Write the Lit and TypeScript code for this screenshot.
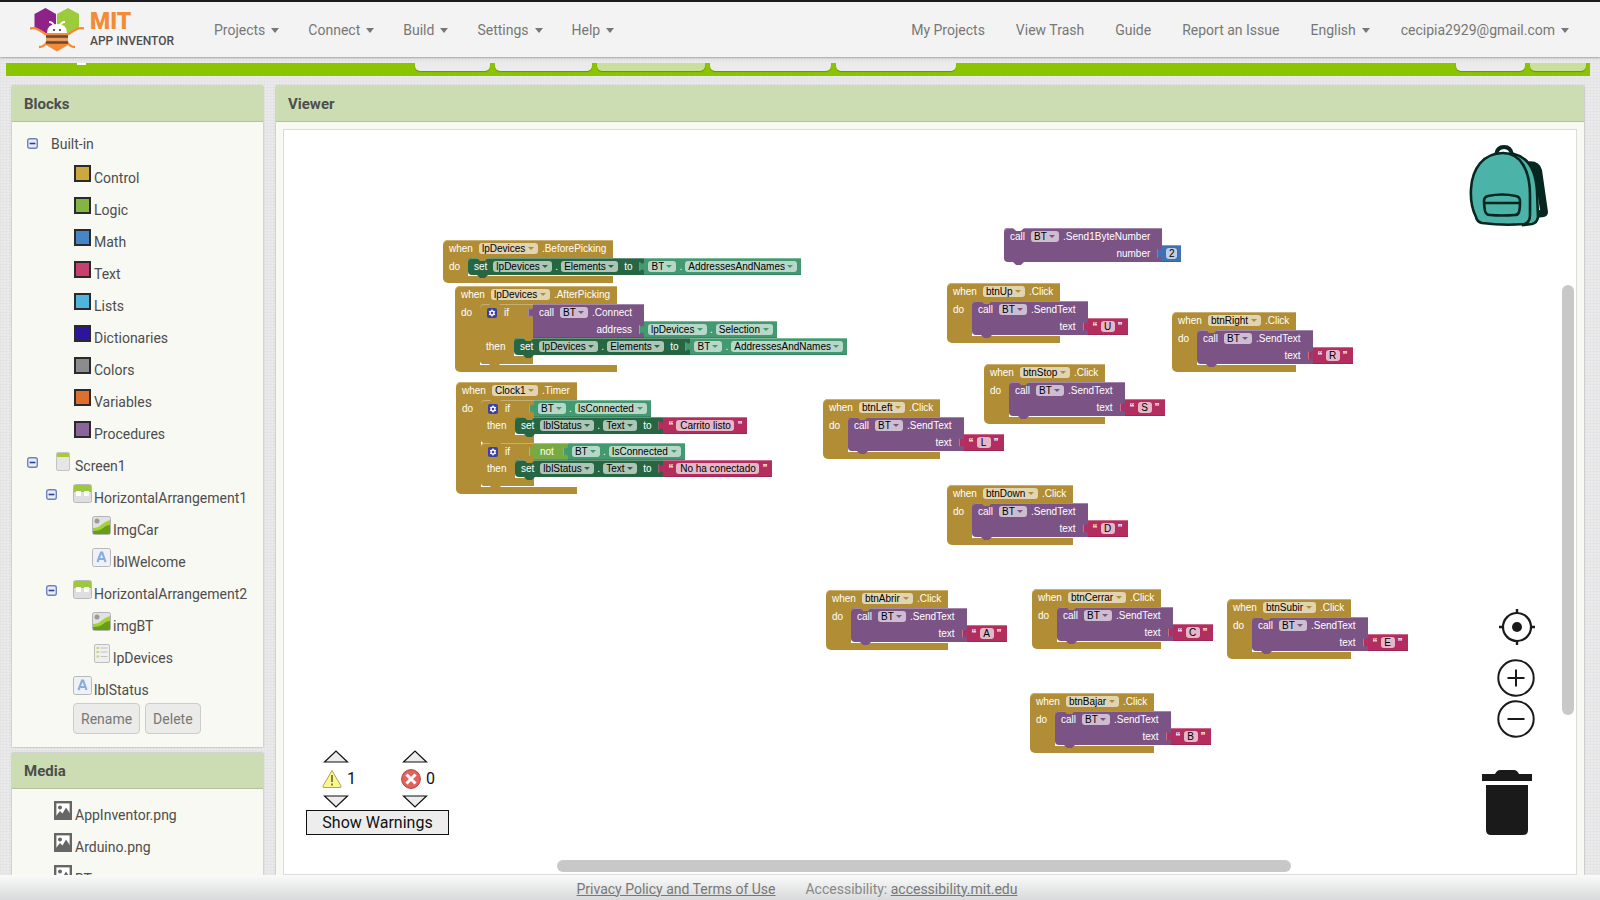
import { LitElement, html, svg, css, nothing } from "lit";
import { customElement } from "lit/decorators.js";

type Kind = "control" | "procedure" | "set" | "get" | "logic" | "text" | "number";

const OPTIONS_LABEL = "Option";

/* ---------- block building helpers ---------- */

const drop = (value: string) => html`<span class="drop"><select aria-label=${OPTIONS_LABEL}><option>${value}</option></select></span>`;

const value = (kind: Kind, body: unknown) => html`<div class="value ${kind}">${body}</div>`;

const getter = (component: string, property: string) =>
  value("get", html`${drop(component)}<span class="dot">.</span>${drop(property)}`);

const literal = (text: string, width: number) =>
  value("text", html`<span class="quote">“</span><input class="field" aria-label="Text" style="width:${width}px" .value=${text}><span class="quote">”</span>`);

const number = (text: string) =>
  value("number", html`<input class="field" aria-label="Number" style="width:11px" .value=${text}>`);

const setter = (component: string, property: string, input: unknown) => html`
  <div class="stmt set line">
    <span class="word">set</span>${drop(component)}<span class="dot">.</span>${drop(property)}<span class="word to">to</span>
    <span class="plugged">${input}</span>
  </div>`;

const callRows = (component: string, method: string, arg: string, input: unknown) => html`
  <div class="row"><span class="word">call</span>${drop(component)}<span class="after">${method}</span></div>
  <div class="row arg"><span>${arg}</span><span class="plugged">${input}</span></div>`;

const call = (component: string, method: string, arg: string, input: unknown) =>
  html`<div class="stmt procedure">${callRows(component, method, arg, input)}</div>`;

const ifBlock = (test: unknown, then: unknown, tall = false) => html`
  <div class="stmt control cond">
    <div class="row test ${tall ? "tall" : ""}">
      <svg class="gear" viewBox="0 0 10 10"><rect width="10" height="10" rx="2" fill="#3b3fa5"/><circle cx="5" cy="5" r="2" fill="none" stroke="#fff" stroke-width="1.3"/><path d="M5 1.4v7.2M1.9 3.2l6.2 3.6M8.1 3.2L1.9 6.8" stroke="#fff" stroke-width="1"/><circle cx="5" cy="5" r="1.2" fill="#3b3fa5"/></svg>
      <span>if</span><span class="plugged end">${test}</span>
    </div>
    <div class="body"><div class="bar then">then</div><div class="slot">${then}</div></div>
    <div class="foot"></div>
  </div>`;

const event = (component: string, name: string, body: unknown) => html`
  <div class="event control">
    <div class="head"><span class="word">when</span>${drop(component)}<span class="after">${name}</span></div>
    <div class="body"><div class="bar do">do</div><div class="slot">${body}</div></div>
    <div class="foot"></div>
  </div>`;

const sendEvent = (button: string, letter: string) =>
  event(button, ".Click", call("BT", ".SendText", "text", literal(letter, 14)));

/* Top-level blocks with their place on the workspace. */
const BLOCKS: { x: number; y: number; block: unknown }[] = [
  { x: 159, y: 110, block: event("lpDevices", ".BeforePicking", setter("lpDevices", "Elements", getter("BT", "AddressesAndNames"))) },
  {
    x: 171, y: 156,
    block: event("lpDevices", ".AfterPicking", ifBlock(
      value("procedure", html`<div class="stack">${callRows("BT", ".Connect", "address", getter("lpDevices", "Selection"))}</div>`),
      setter("lpDevices", "Elements", getter("BT", "AddressesAndNames")), true)),
  },
  {
    x: 172, y: 252,
    block: event("Clock1", ".Timer", html`
      ${ifBlock(getter("BT", "IsConnected"), setter("lblStatus", "Text", literal("Carrito listo", 58)))}
      ${ifBlock(value("logic", html`<span class="not">not</span><span class="plugged">${getter("BT", "IsConnected")}</span>`),
        setter("lblStatus", "Text", literal("No ha conectado", 83)))}`),
  },
  { x: 720, y: 98, block: call("BT", ".Send1ByteNumber", "number", number("2")) },
  { x: 663, y: 153, block: sendEvent("btnUp", "U") },
  { x: 888, y: 182, block: sendEvent("btnRight", "R") },
  { x: 700, y: 234, block: sendEvent("btnStop", "S") },
  { x: 539, y: 269, block: sendEvent("btnLeft", "L") },
  { x: 663, y: 355, block: sendEvent("btnDown", "D") },
  { x: 542, y: 460, block: sendEvent("btnAbrir", "A") },
  { x: 748, y: 459, block: sendEvent("btnCerrar", "C") },
  { x: 943, y: 469, block: sendEvent("btnSubir", "E") },
  { x: 746, y: 563, block: sendEvent("btnBajar", "B") },
];

@customElement("block-workspace")
class BlockWorkspace extends LitElement {
  static styles = css`
    :host { display: block; position: absolute; inset: 0; overflow: hidden; font: 10px/17px "Liberation Sans", Arial, sans-serif; color: #fff; white-space: nowrap; }
    .top { position: absolute; }
    .control { --c: #b18e35; --hi: #c8b072; }
    .procedure { --c: #7c5385; --hi: #a387aa; }
    .set { --c: #266643; --hi: #67947b; }
    .get { --c: #439970; --hi: #7bb89b; }
    .logic { --c: #77ab41; --hi: #a0c47a; }
    .text { --c: #b32d5e; --hi: #ca6c8e; }
    .number { --c: #3f71b5; --hi: #799ccb; }
    .event { display: grid; width: max-content; }
    .head { display: flex; align-items: center; height: 18px; padding: 0 7px 2px 6px; box-sizing: border-box; background: var(--c); border-radius: 5px 0 0 0; box-shadow: inset 0 1px var(--hi); }
    .body { display: flex; width: 0; min-width: 100%; }
    .bar { flex: none; background: var(--c); box-sizing: border-box; }
    .bar.do { width: 25px; padding-left: 6px; }
    .bar.then { width: 34px; padding-left: 6px; }
    .slot { flex: 1; width: 0; padding-bottom: 1px; background: linear-gradient(#b18e35, #b18e35) 0 0 / 6px 6px no-repeat, #fff; }
    .foot { height: 7px; background: var(--c); border-radius: 0 0 0 5px; }
    .stmt { position: relative; width: max-content; background: var(--c); border-radius: 4px 0 0 4px; box-shadow: inset 0 1px var(--hi); }
    .stmt::before, .stmt::after { content: ""; position: absolute; left: 9px; width: 11px; height: 3px; clip-path: polygon(0 0, 100% 0, 72% 100%, 28% 100%); }
    .stmt::before { top: 0; background: var(--notch, #b18e35); }
    .stmt::after { top: 100%; background: var(--c); z-index: 1; }
    .free > .stmt { --notch: #fff; }
    .line, .row { display: flex; align-items: center; height: 17px; }
    .line { padding-left: 6px; }
    .row { padding: 0 12px 0 6px; }
    .row.arg { justify-content: flex-end; padding-left: 40px; }
    .row.arg > .plugged { margin: 0 -12px 0 12px; }
    .word { margin-right: 6px; }
    .word.to { margin: 0 12px 0 6px; }
    .dot { margin: 0 3px; }
    .after { margin-left: 4px; }
    .plugged { display: block; width: 0; height: 17px; overflow: visible; }
    .value { position: relative; display: flex; align-items: center; width: max-content; min-height: 17px; padding: 0 4px; background: var(--c); box-shadow: inset 0 1px var(--hi), inset 0 -1px rgba(0, 0, 0, .12); box-sizing: border-box; }
    .value::before { content: ""; position: absolute; left: -5px; top: 4px; width: 5px; height: 9px; background: var(--c); clip-path: polygon(100% 0, 100% 100%, 60% 80%, 0 100%, 0 0, 60% 20%); box-shadow: inset 1px 0 var(--hi); }
    .value.text { padding: 0 5px; }
    .value.procedure { padding: 0; }
    .value.logic { padding: 0 0 0 6px; }
    .not { margin-right: 14px; }
    .drop { position: relative; display: flex; height: 11px; border-radius: 3px; background: rgba(255, 255, 255, .62); }
    .drop::after { content: ""; position: absolute; right: 4px; top: 4px; border: 3px solid transparent; border-top: 3px solid var(--c); border-bottom: 0; pointer-events: none; }
    select { appearance: none; border: 0; margin: 0; padding: 0 12px 0 3px; background: none; font: 10px/11px "Liberation Sans", Arial, sans-serif; color: #000; height: 11px; }
    .field { height: 11px; padding: 0; border: 0; border-radius: 3px; margin: 0 3px; background: rgba(255, 255, 255, .66); font: 10px/11px "Liberation Sans", Arial, sans-serif; color: #000; text-align: center; }
    .number .field { margin: 0; }
    .quote { font-weight: 700; width: 5px; text-align: center; }
    .cond { width: 53px; border-radius: 4px 0 0 4px; }
    .row.test { padding: 0 0 0 7px; }
    .row.test.tall { height: 34px; align-items: flex-start; }
    .row.test.tall .gear { margin-top: 4px; }
    .gear { width: 10px; height: 10px; margin-right: 7px; }
    .end { margin-left: auto; }
    .cond .foot { height: 8px; border-radius: 0 0 0 4px; }
  `;

  render() {
    return BLOCKS.map((b) => html`<div class="top free" style="left:${b.x}px;top:${b.y}px">${b.block}</div>`);
  }
}

/* ---------- tree icons ---------- */

const icons: Record<string, unknown> = {
  screen: svg`<rect x=".5" y=".5" width="13" height="18" rx="1.5" fill="#e6e6e6" stroke="#c4c4c4"/><path d="M1 5V2q0-1 1-1h10q1 0 1 1v3z" fill="#a9c938"/>`,
  arrangement: svg`<rect x=".5" y=".5" width="18" height="18" rx="2" fill="#dedede" stroke="#b9b9b9"/><path d="M1 8V2q0-1 1-1h15q1 0 1 1v6z" fill="#9cc93a"/><rect x="3" y="7" width="5" height="5" rx="1" fill="#fff"/><rect x="11" y="7" width="5" height="5" rx="1" fill="#fff"/>`,
  image: svg`<rect x=".5" y=".5" width="18" height="18" rx="2" fill="#dfe2e0" stroke="#b4b4b4"/><circle cx="5" cy="5" r="2.500" fill="#9a9a9a"/><path d="M1 12q5 0 8-3t9-5v13q0 1-1 1H2q-1 0-1-1z" fill="#a5d03c"/><path d="M1 15q7 0 10-3t7-3v8q0 1-1 1H2q-1 0-1-1z" fill="#64a012"/>`,
  label: svg`<rect x=".5" y=".5" width="18" height="18" rx="2" fill="#eff1f4" stroke="#b5b9bd"/><path d="M5.500 14L9 4.500h1.200L13.500 14M7 11h5" fill="none" stroke="#86aee0" stroke-width="2.200"/>`,
  list: svg`<rect x="2.500" y=".5" width="15" height="18" rx="1.500" fill="#efefef" stroke="#bdbdbd"/><path d="M8.500 4h7M8.500 8h7M8.500 12.500h7" stroke="#c2c2c2"/><path d="M4.500 4h2.500M4.500 8h2.500M4.500 12.500h2.500" stroke="#c3d67c" stroke-width="2"/>`,
  media: svg`<rect x="1.200" y="1.200" width="15.600" height="16.600" fill="#fff" stroke="#666" stroke-width="2.400"/><circle cx="6" cy="6.500" r="2" fill="#666"/><path d="M2 15l4-5 2.500 2.500L12 6.500l4 6V17H2z" fill="#666"/>`,
};

type Node = { label: string; level: number; icon?: string; color?: string; toggle?: boolean };

const DRAWERS: Node[] = [
  ["Control", "#cda83e"], ["Logic", "#84b444"], ["Math", "#4885c7"], ["Text", "#c8406e"], ["Lists", "#50b4dc"],
  ["Dictionaries", "#2c149c"], ["Colors", "#8c8c8c"], ["Variables", "#dd702f"], ["Procedures", "#8b659a"],
].map(([label, color]) => ({ label, color, level: 1 }));

const COMPONENTS: Node[] = [
  { label: "Screen1", level: 0, icon: "screen", toggle: true },
  { label: "HorizontalArrangement1", level: 1, icon: "arrangement", toggle: true },
  { label: "ImgCar", level: 2, icon: "image" },
  { label: "lblWelcome", level: 2, icon: "label" },
  { label: "HorizontalArrangement2", level: 1, icon: "arrangement", toggle: true },
  { label: "imgBT", level: 2, icon: "image" },
  { label: "lpDevices", level: 2, icon: "list" },
  { label: "lblStatus", level: 1, icon: "label" },
];

const toggle = html`<button class="toggle" aria-label="Collapse"><svg width="11" height="11" viewBox="0 0 11 11"><rect x=".7" y=".7" width="9.600" height="9.600" rx="2" fill="#e8edfa" stroke="#6f80c0" stroke-width="1.400"/><path d="M2.600 5.500h5.800" stroke="#2f3d9a" stroke-width="1.600"/></svg></button>`;

const treeRow = (n: Node) => html`
  <li class="node l${n.level}">
    <span class="gutter">${n.toggle ? toggle : nothing}</span>
    ${n.color
      ? html`<span class="swatch" style="background:${n.color}"></span>`
      : html`<svg class="icon" width=${n.level === 0 ? 14 : 19} height="19">${icons[n.icon!]}</svg>`}
    <span>${n.label}</span>
  </li>`;

@customElement("app-root")
class AppRoot extends LitElement {
  static styles = css`
    :host { display: flex; flex-direction: column; height: 100vh; overflow: hidden; font: 14px/20px Roboto, sans-serif; color: #4d4d4d; background: repeating-linear-gradient(90deg, rgba(0, 0, 0, .015) 0 1px, transparent 1px 3px), repeating-linear-gradient(#e5e5e7 0 1px, #eaeaeb 1px 3px); }
    button { font: inherit; color: inherit; cursor: pointer; }
    .bar { flex: none; display: flex; align-items: center; gap: 1px; height: 57px; box-sizing: border-box; border-top: 2px solid #1c1c1c; background: #f3f3f3; box-shadow: 0 1px 2px rgba(0, 0, 0, .3); position: relative; z-index: 2; padding: 0 17px 0 30px; color: #777; }
    .brand { display: flex; gap: 6px; color: #4d4d4d; text-decoration: none; margin-right: 25px; }
    .brand .words { display: flex; flex-direction: column; padding-top: 1px; }
    .mit { font-weight: 900; font-size: 23px; line-height: 26px; color: #f48b36; }
    .inv { font-weight: 500; font-size: 12px; line-height: 12px; }
    .menu { border: 0; background: none; padding: 0 14px; display: flex; align-items: center; gap: 6px; color: inherit; text-decoration: none; line-height: 20px; font-size: 14px; white-space: nowrap; }
    .menu.drop::after { content: ""; border: 4px solid transparent; border-top: 5px solid #777; border-bottom: 0; margin-top: 2px; }
    .account { display: flex; gap: 3px; margin-left: auto; }
    .spacer { flex: 1; }
    .page { flex: 1; min-height: 0; overflow: hidden; display: flex; flex-direction: column; padding-top: 6px; }
    .strip { flex: none; display: flex; gap: 5px; height: 13px; margin: 0 10px 10px 6px; padding-right: 4px; background: #8bc400; }
    .title { width: 9px; height: 2px; margin: 0 324px 0 71px; background: #fff; }
    .tab { height: 8px; border: 0; padding: 0; border-radius: 0 0 5px 5px; background: #ebebeb; box-shadow: 0 1px 1px rgba(0, 0, 0, .25); }
    .tab.on { background: #c9df9b; }
    .cols { flex: 1; min-height: 0; display: flex; gap: 13px; padding: 0 16px 0 12px; }
    .side { flex: none; width: 251px; display: flex; flex-direction: column; gap: 6px; min-height: 0; }
    .panel { background: #f8f9f2; box-shadow: 0 0 2px rgba(0, 0, 0, .3); }
    .panel h2 { margin: 0; height: 36px; line-height: 36px; padding-left: 12px; font-size: 15px; font-weight: 700; background: #ccddb3; border-bottom: 1px solid #b3c29c; box-sizing: border-box; }
    .blocks { flex: none; height: 661px; }
    .media { flex: 1; min-height: 0; overflow: hidden; }
    ul { list-style: none; margin: 0; padding: 5px 0 0; }
    .node { display: flex; align-items: baseline; height: 32px; line-height: 32px; font-size: 14px; white-space: nowrap; }
    .node.root { height: 35px; line-height: 34px; }
    .gutter { flex: none; display: flex; align-self: flex-start; padding-top: 7px; }
    .root .gutter { padding-top: 11px; }
    .l0 .gutter { width: 29px; padding-left: 15px; }
    .l1 .gutter { width: 27px; padding-left: 34px; }
    .l2 .gutter { width: 27px; padding-left: 53px; }
    .l0 .icon { margin-right: 5px; }
    .toggle { border: 0; padding: 0; background: none; height: 11px; line-height: 0; }
    .root .gutter { width: 24px; }
    .swatch { align-self: flex-start; width: 17px; height: 17px; box-sizing: border-box; border: 2px solid #2a2a2a; margin: 3px 3px 0 1px; }
    .icon { flex: none; margin-right: 2px; }
    .actions { display: flex; gap: 5px; padding-left: 61px; margin-top: -3px; }
    .actions button { height: 31px; padding: 0 7px; border: 1px solid #ccc; border-radius: 4px; background: #ebebe9; color: #777; font-size: 14px; }
    .files { padding-top: 10px; }
    .files .node { padding-left: 42px; }
    .files .icon { margin-right: 3px; }
    .viewer { flex: 1; min-width: 0; display: flex; flex-direction: column; }
    .viewer h2 { flex: none; }
    .canvas { flex: 1; position: relative; margin: 7px 7px 0 7px; border: 1px solid #dcdcdc; background: #fff; }
    .over { position: absolute; }
    .tool { position: absolute; border: 0; padding: 0; background: none; line-height: 0; }
    .pack { top: 15px; right: 27px; }
    .target { top: 478px; right: 40px; }
    .plus { top: 529px; right: 41px; }
    .minus { top: 570px; right: 41px; }
    .trash { top: 640px; right: 44px; }
    .warn { left: 22px; top: 620px; display: flex; flex-direction: column; color: #111; font-size: 16px; }
    .counts { display: grid; grid-template-columns: 79px auto; padding-left: 16px; }
    .count { display: flex; flex-direction: column; gap: 6px; }
    .count .n { display: flex; align-items: center; gap: 5px; height: 20px; line-height: 20px; padding-top: 1px; }
    .count button { border: 0; background: none; padding: 0; line-height: 0; text-align: left; height: 12px; margin-left: 1px; }
    .show { width: 143px; height: 25px; margin-top: 3px; padding: 0; border: 1px solid #111; background: #ededed; color: #111; white-space: nowrap; }
    .vbar { right: 2px; top: 155px; width: 12px; height: 430px; border-radius: 6px; background: #c8c8c8; }
    .hbar { left: 273px; bottom: 2px; width: 734px; height: 12px; border-radius: 6px; background: #c8c8c8; }
    .footer { flex: none; height: 25px; box-sizing: border-box; padding: 2px 6px 0 0; display: flex; justify-content: center; align-items: center; gap: 30px; background: linear-gradient(#fafafa, #d8dadb); color: #888; position: relative; z-index: 2; }
    .footer a { color: #777; }
  `;

  render() {
    const menu = (t: string) => html`<button class="menu drop">${t}</button>`;
    const link = (t: string) => html`<a class="menu" href="#">${t}</a>`;
    const tri = (up: boolean, label: string) => html`<button aria-label=${label}><svg width="26" height="13" viewBox="0 0 26 13"><path d=${up ? "M1.500 12L13 1l11.500 11z" : "M1.500 1L13 12 24.500 1z"} fill="#ececec" stroke="#111" stroke-width="1.200"/></svg></button>`;
    return html`
      <header class="bar">
        <a class="brand" href="#" aria-label="MIT App Inventor">
          <svg width="54" height="44" viewBox="0 0 54 44">
            <path d="M15.500 0l10.500 6v13.500L15.500 26 4.500 19.500V6z" fill="#8e2286"/><path d="M38 0l11 6v13.500L38 26l-11-6.500V6z" fill="#9ccb3c"/>
            <path d="M0 20.500q4-1 8 1t8 5M54 20.500q-4-1-8 1t-8 5M9 39q5 0 8-5M45 39q-5 0-8-5" fill="none" stroke="#f48b36" stroke-width="2.400"/>
            <path d="M16 25h22v12L27 43.500 16 37z" fill="#f48b36"/><path d="M16 28.500h22M16 34.500h22" stroke="#6a4a34" stroke-width="2.400"/><path d="M16 31.500h22" stroke="#d9a77a" stroke-width="2"/>
            <path d="M17 25q0-9 10-9t10 9z" fill="#fff"/><path d="M19 14q4 0 5 4M35 14q-4 0-5 4" fill="none" stroke="#fff" stroke-width="1.800"/><circle cx="24" cy="22" r="1.100" fill="#333"/><circle cx="30" cy="22" r="1.100" fill="#333"/>
          </svg>
          <span class="words"><span class="mit">MIT</span><span class="inv">APP INVENTOR</span></span>
        </a>
        ${["Projects", "Connect", "Build", "Settings", "Help"].map(menu)}
        <nav class="account">
          ${["My Projects", "View Trash", "Guide", "Report an Issue"].map(link)}
          ${["English", "cecipia2929@gmail.com"].map(menu)}
        </nav>
      </header>
      <main class="page">
        <div class="strip">
          <span class="title"></span>
          ${[75, 97, 108, 121, 120].map((w, i) => html`<button class="tab ${i === 2 ? "on" : ""}" aria-label="Tab ${i + 1}" style="width:${w}px"></button>`)}
          <span class="spacer"></span>
          ${[69, 56].map((w, i) => html`<button class="tab ${i === 1 ? "on" : ""}" aria-label="View ${i + 1}" style="width:${w}px"></button>`)}
        </div>
        <div class="cols">
          <div class="side">
            <section class="panel blocks">
              <h2>Blocks</h2>
              <ul>
                <li class="node l0 root"><span class="gutter">${toggle}</span><span>Built-in</span></li>
                ${DRAWERS.map(treeRow)}
                ${COMPONENTS.map(treeRow)}
              </ul>
              <div class="actions"><button>Rename</button><button>Delete</button></div>
            </section>
            <section class="panel media">
              <h2>Media</h2>
              <ul class="files">
                ${["AppInventor.png", "Arduino.png", "BT.png"].map((f) => html`<li class="node"><svg class="icon" width="18" height="19">${icons.media}</svg><span>${f}</span></li>`)}
              </ul>
            </section>
          </div>
          <section class="panel viewer">
            <h2>Viewer</h2>
            <div class="canvas">
              <block-workspace></block-workspace>
              <button class="tool pack" aria-label="Backpack">
                <svg width="80" height="82" viewBox="0 0 80 82">
                  <path fill-rule="evenodd" d="M56 17q14-3 17 8l6 42q0 4-4 5l-9 1V66l5-1-5-34q-1-6-7-7z" fill="#06261f"/>
                  <path d="M45 9q21 5 23 37l1 26q-1 6-6 7l-9 1z" fill="#4cb3a9" stroke="#06261f" stroke-width="2.600"/>
                  <path d="M27 10q1-8 8-8t8 8" fill="none" stroke="#06261f" stroke-width="4"/>
                  <path d="M34 8C14 8 3 24 2 44q-1 16 5 28 1 5 6 6 22 3 42 1 6-1 6-9V50C61 26 52 8 34 8z" fill="#4cb3a9" stroke="#06261f" stroke-width="2.600"/>
                  <path d="M15 56q0-4 4-5 14-3 28 0 4 1 4 5 0 8-1 11-1 3-4 3-13 1-25 0-4 0-5-4-1-6-1-10zM15 58h36" fill="none" stroke="#06261f" stroke-width="2.600"/>
                </svg>
              </button>
              <button class="tool target" aria-label="Center"><svg width="38" height="38" viewBox="-19 -19 38 38" fill="none" stroke="#1a1a1a"><circle r="14" stroke-width="2.200"/><circle r="5" fill="#1a1a1a" stroke="none"/><path d="M0-18v5M0 18v-5M-18 0h5M18 0h-5" stroke-width="2.400"/></svg></button>
              <button class="tool plus" aria-label="Zoom in"><svg width="38" height="38" viewBox="-19 -19 38 38" fill="none" stroke="#1a1a1a" stroke-width="2"><circle r="17.700"/><path d="M-8.500 0h17M0-8.500v17"/></svg></button>
              <button class="tool minus" aria-label="Zoom out"><svg width="38" height="38" viewBox="-19 -19 38 38" fill="none" stroke="#1a1a1a" stroke-width="2"><circle r="17.700"/><path d="M-8.500 0h17"/></svg></button>
              <button class="tool trash" aria-label="Delete blocks"><svg width="50" height="65" viewBox="0 0 50 65" fill="#1a1a1a"><path d="M0 4h13q2-4 5-4h14q3 0 5 4h13v7H0zM4 15h42v45q0 5-5 5H9q-5 0-5-5z"/></svg></button>
              <div class="over warn">
                <div class="counts">
                  <div class="count">${tri(true, "Previous warning")}
                    <span class="n"><svg width="20" height="20" viewBox="0 0 20 20"><path d="M10 1.500L19 17q.5 1.500-1 1.500H2Q.5 18.500 1 17z" fill="#fbf78f" stroke="#a9a467"/><path d="M10 6v7M10 14.500v2" stroke="#77743a" stroke-width="1.800"/></svg>1</span>
                    ${tri(false, "Next warning")}</div>
                  <div class="count">${tri(true, "Previous error")}
                    <span class="n"><svg width="20" height="20" viewBox="0 0 20 20"><circle cx="10" cy="10" r="9.400" fill="#e8605a" stroke="#a04a45"/><path d="M5.500 5.500l9 9M14.500 5.500l-9 9" stroke="#fff" stroke-width="3"/></svg>0</span>
                    ${tri(false, "Next error")}</div>
                </div>
                <button class="show">Show Warnings</button>
              </div>
              <div class="over vbar"></div>
              <div class="over hbar"></div>
            </div>
          </section>
        </div>
      </main>
      <footer class="footer">
        <a href="#">Privacy Policy and Terms of Use</a>
        <span>Accessibility: <a href="#">accessibility.mit.edu</a></span>
      </footer>`;
  }
}
